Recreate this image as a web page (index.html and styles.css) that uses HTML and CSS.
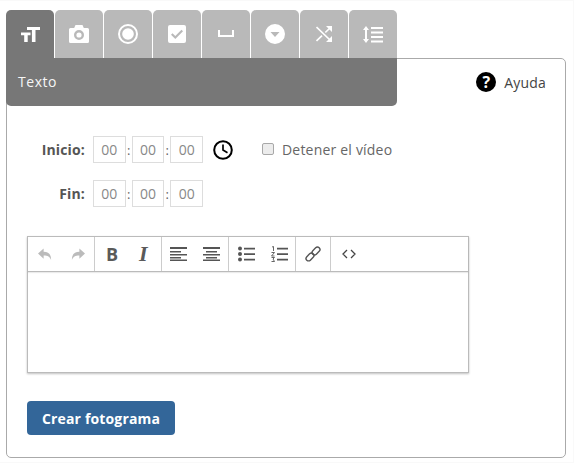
FILE: index.html
```html
<!DOCTYPE html>
<html lang="es">
<head>
<meta charset="utf-8">
<title>Crear fotograma</title>
<link rel="stylesheet" href="styles.css">
</head>
<body>
<div class="tabs">
  <div class="tab tab-active"><svg width="19" height="15" viewBox="0 0 19 15"><path class="w" d="M6 0h13v3h-4.500v12h-3.600V3H6zM0 5.500h9.500v2.800H6.700V15H3.200V8.300H0z"/></svg></div>
  <div class="tab"><svg width="20" height="18" viewBox="0 0 20 18"><path class="w" fill-rule="evenodd" d="M1.500 3h3.700L6.500 0h7l1.300 3h3.700A1.500 1.500 0 0 1 20 4.500v12a1.500 1.500 0 0 1-1.500 1.500h-17A1.500 1.500 0 0 1 0 16.500v-12A1.500 1.500 0 0 1 1.500 3zM10 5a5 5 0 1 0 0 10 5 5 0 0 0 0-10zm0 2.400a2.600 2.600 0 1 1 0 5.200 2.600 2.600 0 0 1 0-5.200z"/></svg></div>
  <div class="tab"><svg width="20" height="20" viewBox="0 0 20 20"><circle class="ws" cx="10" cy="10" r="9" stroke-width="2"/><circle class="w" cx="10" cy="10" r="5.800"/></svg></div>
  <div class="tab"><svg width="18" height="18" viewBox="0 0 18 18"><path class="w" fill-rule="evenodd" d="M2 0h14a2 2 0 0 1 2 2v14a2 2 0 0 1-2 2H2a2 2 0 0 1-2-2V2a2 2 0 0 1 2-2zm11.500 4.700L7.300 11 4.500 8.200 3 9.700l4.300 4.300L15 6.200z"/></svg></div>
  <div class="tab"><svg width="16" height="8" viewBox="0 0 16 8"><path class="w" d="M0 0h2v5h12V0h2v7H0z"/></svg></div>
  <div class="tab"><svg width="20" height="20" viewBox="0 0 20 20"><path class="w" fill-rule="evenodd" d="M10 0a10 10 0 1 1 0 20 10 10 0 0 1 0-20zM5.500 8l4.500 5 4.500-5z"/></svg></div>
  <div class="tab"><svg width="16" height="16" viewBox="0 0 16 16"><path class="ws" stroke-width="1.700" d="M.5 1 14 14M.5 15 6 9.700M9.300 6.500 14 2"/><path class="w" d="M16 0v6l-6-6zM16 16h-6l6-6z"/></svg></div>
  <div class="tab"><svg width="20" height="17" viewBox="0 0 20 17"><path class="w" d="M3 0l3 4H4v9h2l-3 4-3-4h2V4H0zM8 1h12v2H8zM8 5.500h12v2H8zM8 10h12v2H8zM8 14.500h12v2H8z"/></svg></div>
</div>
<main class="panel">
  <div class="panel-top">
    <div class="band">Texto</div>
    <div class="help">
      <span class="qmark">?</span>
      <span>Ayuda</span>
    </div>
  </div>
  <div class="time-row">
    <label class="time-label">Inicio:</label>
    <div class="time-group">
      <span class="time-box">00</span><span class="colon">:</span><span class="time-box">00</span><span class="colon">:</span><span class="time-box">00</span>
    </div>
    <svg class="clock" width="20" height="20" viewBox="0 0 20 20"><circle cx="10" cy="10" r="8.800" fill="none" stroke="#000" stroke-width="2"/><path d="M10 4.500V10l4.500 2.700" fill="none" stroke="#000" stroke-width="1.700"/></svg>
    <label class="stop"><span class="checkbox"></span>Detener el vídeo</label>
  </div>
  <div class="time-row time-row-end">
    <label class="time-label">Fin:</label>
    <div class="time-group">
      <span class="time-box">00</span><span class="colon">:</span><span class="time-box">00</span><span class="colon">:</span><span class="time-box">00</span>
    </div>
  </div>
  <section class="editor">
    <div class="toolbar">
      <div class="tool-group g-history">
        <svg width="15" height="16" viewBox="0 0 16 16"><path class="lt" d="M6 2v3.500c5 0 8 2.500 8 9-1.300-3.700-3.500-5-8-5V13L0 7.500z"/></svg>
        <svg width="15" height="16" viewBox="0 0 16 16"><path class="lt" d="M10 2v3.500c-5 0-8 2.500-8 9 1.300-3.700 3.500-5 8-5V13l6-5.500z"/></svg>
      </div>
      <div class="tool-group g-format">
        <span class="bold">B</span>
        <span class="italic">I</span>
      </div>
      <div class="tool-group g-align">
        <svg width="17" height="14" viewBox="0 0 17 14"><path class="dk" d="M0 0h17v2H0zM0 4h11v1.500H0zM0 7h17v1.500H0zM0 10h11v1.500H0zM0 12.500h17V14H0z"/></svg>
        <svg width="17" height="14" viewBox="0 0 17 14"><path class="dk" d="M0 0h17v2H0zM3 4h11v1.500H3zM0 7h17v1.500H0zM3 10h11v1.500H3zM0 12.500h17V14H0z"/></svg>
      </div>
      <div class="tool-group g-list">
        <svg width="17" height="16" viewBox="0 0 17 16"><circle class="dk" cx="2" cy="2.500" r="2"/><circle class="dk" cx="2" cy="8" r="2"/><circle class="dk" cx="2" cy="13.500" r="2"/><path class="dk" d="M6 1.700h11v1.800H6zM6 7.200h11v1.800H6zM6 12.700h11v1.800H6z"/></svg>
        <svg width="17" height="16" viewBox="0 0 17 16"><path class="dk" d="M6 1.700h11v1.800H6zM6 7.200h11v1.800H6zM6 12.700h11v1.800H6z"/><path fill="none" stroke="#555" stroke-width=".9" d="M1 1l1.500-.5V5M.5 6.500h3l-3 3.500h3M.5 11.500h3L2 13l1.500 2.500h-3"/></svg>
      </div>
      <div class="tool-group g-link">
        <svg width="16" height="16" viewBox="0 0 16 16"><g fill="none" stroke="#555" stroke-width="1.400"><rect x=".5" y="8.500" width="9" height="5" rx="2.500" transform="rotate(-45 5 11)"/><rect x="6.500" y="2.500" width="9" height="5" rx="2.500" transform="rotate(-45 11 5)"/></g></svg>
      </div>
      <div class="tool-group g-code">
        <svg width="14" height="10" viewBox="0 0 14 10"><path fill="none" stroke="#444" stroke-width="1.300" d="M5 1 1 5l4 4M9 1l4 4-4 4"/></svg>
      </div>
    </div>
    <div class="editor-body"></div>
  </section>
  <button class="create" type="button">Crear fotograma</button>
</main>
</body>
</html>
```

FILE: styles.css
```css
* {
  box-sizing: border-box;
}

html,
body {
  margin: 0;
  background: #fff;
}

body {
  min-height: 100vh;
  padding: 10px 8px 5px 6px;
  font-family: "Open Sans", "Liberation Sans", sans-serif;
  font-size: 14px;
  color: #555;
  box-shadow: inset 0 1px #f9f9f9, inset -1px -1px #f9f9f9;
}

svg {
  display: block;
}

.w {
  fill: #fff;
}

.ws {
  fill: none;
  stroke: #fff;
}

.lt {
  fill: #bbb;
}

.dk {
  fill: #555;
}

.tabs {
  display: flex;
  gap: 1px;
  height: 48px;
}

.tab {
  width: 48px;
  height: 48px;
  display: flex;
  align-items: center;
  justify-content: center;
  background: #b9b9b9;
  border-radius: 5px 5px 0 0;
}

.tab-active {
  background: #777;
}

.panel {
  height: 400px;
  border: 1px solid #aaa;
  border-radius: 5px;
}

.panel-top {
  display: flex;
  justify-content: space-between;
  margin: -1px 0 0 -1px;
}

.band {
  width: 391px;
  height: 48px;
  padding-left: 12px;
  line-height: 47px;
  letter-spacing: .55px;
  color: #f6f6f6;
  background: #777;
  border-radius: 0 0 5px 5px;
}

.help {
  display: flex;
  align-items: center;
  gap: 8px;
  height: 48px;
  padding-right: 19px;
  letter-spacing: .2px;
  color: #444;
}

.qmark {
  width: 20px;
  height: 20px;
  line-height: 20px;
  text-align: center;
  font-size: 16px;
  font-weight: 700;
  letter-spacing: 0;
  color: #fff;
  background: #000;
  border-radius: 50%;
}

.time-row {
  display: flex;
  align-items: center;
  height: 27px;
  margin-top: 30px;
}

.time-row-end {
  margin-top: 17px;
}

.time-label {
  width: 78px;
  margin-right: 8px;
  text-align: right;
  font-weight: 700;
  letter-spacing: .15px;
}

.time-group {
  display: flex;
  align-items: center;
}

.time-box {
  width: 32.67px;
  height: 27px;
  line-height: 25px;
  text-align: center;
  color: #888;
  border: 1px solid #ddd;
}

.colon {
  width: 6px;
  text-align: center;
  font-size: 13px;
  color: #666;
}

.clock {
  margin-left: 10px;
}

.stop {
  display: flex;
  align-items: center;
  margin-left: 29px;
  letter-spacing: .2px;
  color: #666;
}

.checkbox {
  width: 12px;
  height: 12px;
  margin: 0 8px 2px 0;
  background: #ececec;
  border: 1px solid #a8a8a8;
  border-radius: 2px;
}

.editor {
  width: 442px;
  height: 137px;
  margin: 29px 0 0 20px;
  border: 1px solid #bbb;
  box-shadow: 0 1px 2px rgba(0, 0, 0, .25);
}

.toolbar {
  display: flex;
  height: 35px;
  border-bottom: 1px solid #bbb;
  box-shadow: 0 1px 1px rgba(0, 0, 0, .08);
}

.tool-group {
  display: flex;
  align-items: center;
  border-right: 1px solid #ccc;
}

.g-history {
  width: 67px;
  gap: 17px;
  padding-left: 10px;
}

.g-format {
  width: 67px;
  gap: 21px;
  padding-left: 11px;
}

.g-align {
  width: 67px;
  gap: 16px;
  padding-left: 8px;
}

.g-list {
  width: 67px;
  gap: 16px;
  padding-left: 9px;
}

.g-link {
  width: 35px;
  justify-content: center;
}

.g-code {
  width: 35px;
  justify-content: center;
  border-right: 0;
}

.bold {
  width: 12px;
  font-size: 18px;
  font-weight: 700;
  color: #5a5a5a;
}

.italic {
  width: 12px;
  font-family: "Liberation Serif", serif;
  font-size: 22px;
  font-style: italic;
  font-weight: 700;
  color: #5a5a5a;
}

.create {
  display: block;
  width: 148px;
  height: 34px;
  margin: 28px 0 0 20px;
  padding: 0;
  font-family: "Open Sans", "Liberation Sans", sans-serif;
  font-size: 14px;
  font-weight: 700;
  letter-spacing: .15px;
  color: #fff;
  background: #336699;
  border: 0;
  border-radius: 4px;
}
```
